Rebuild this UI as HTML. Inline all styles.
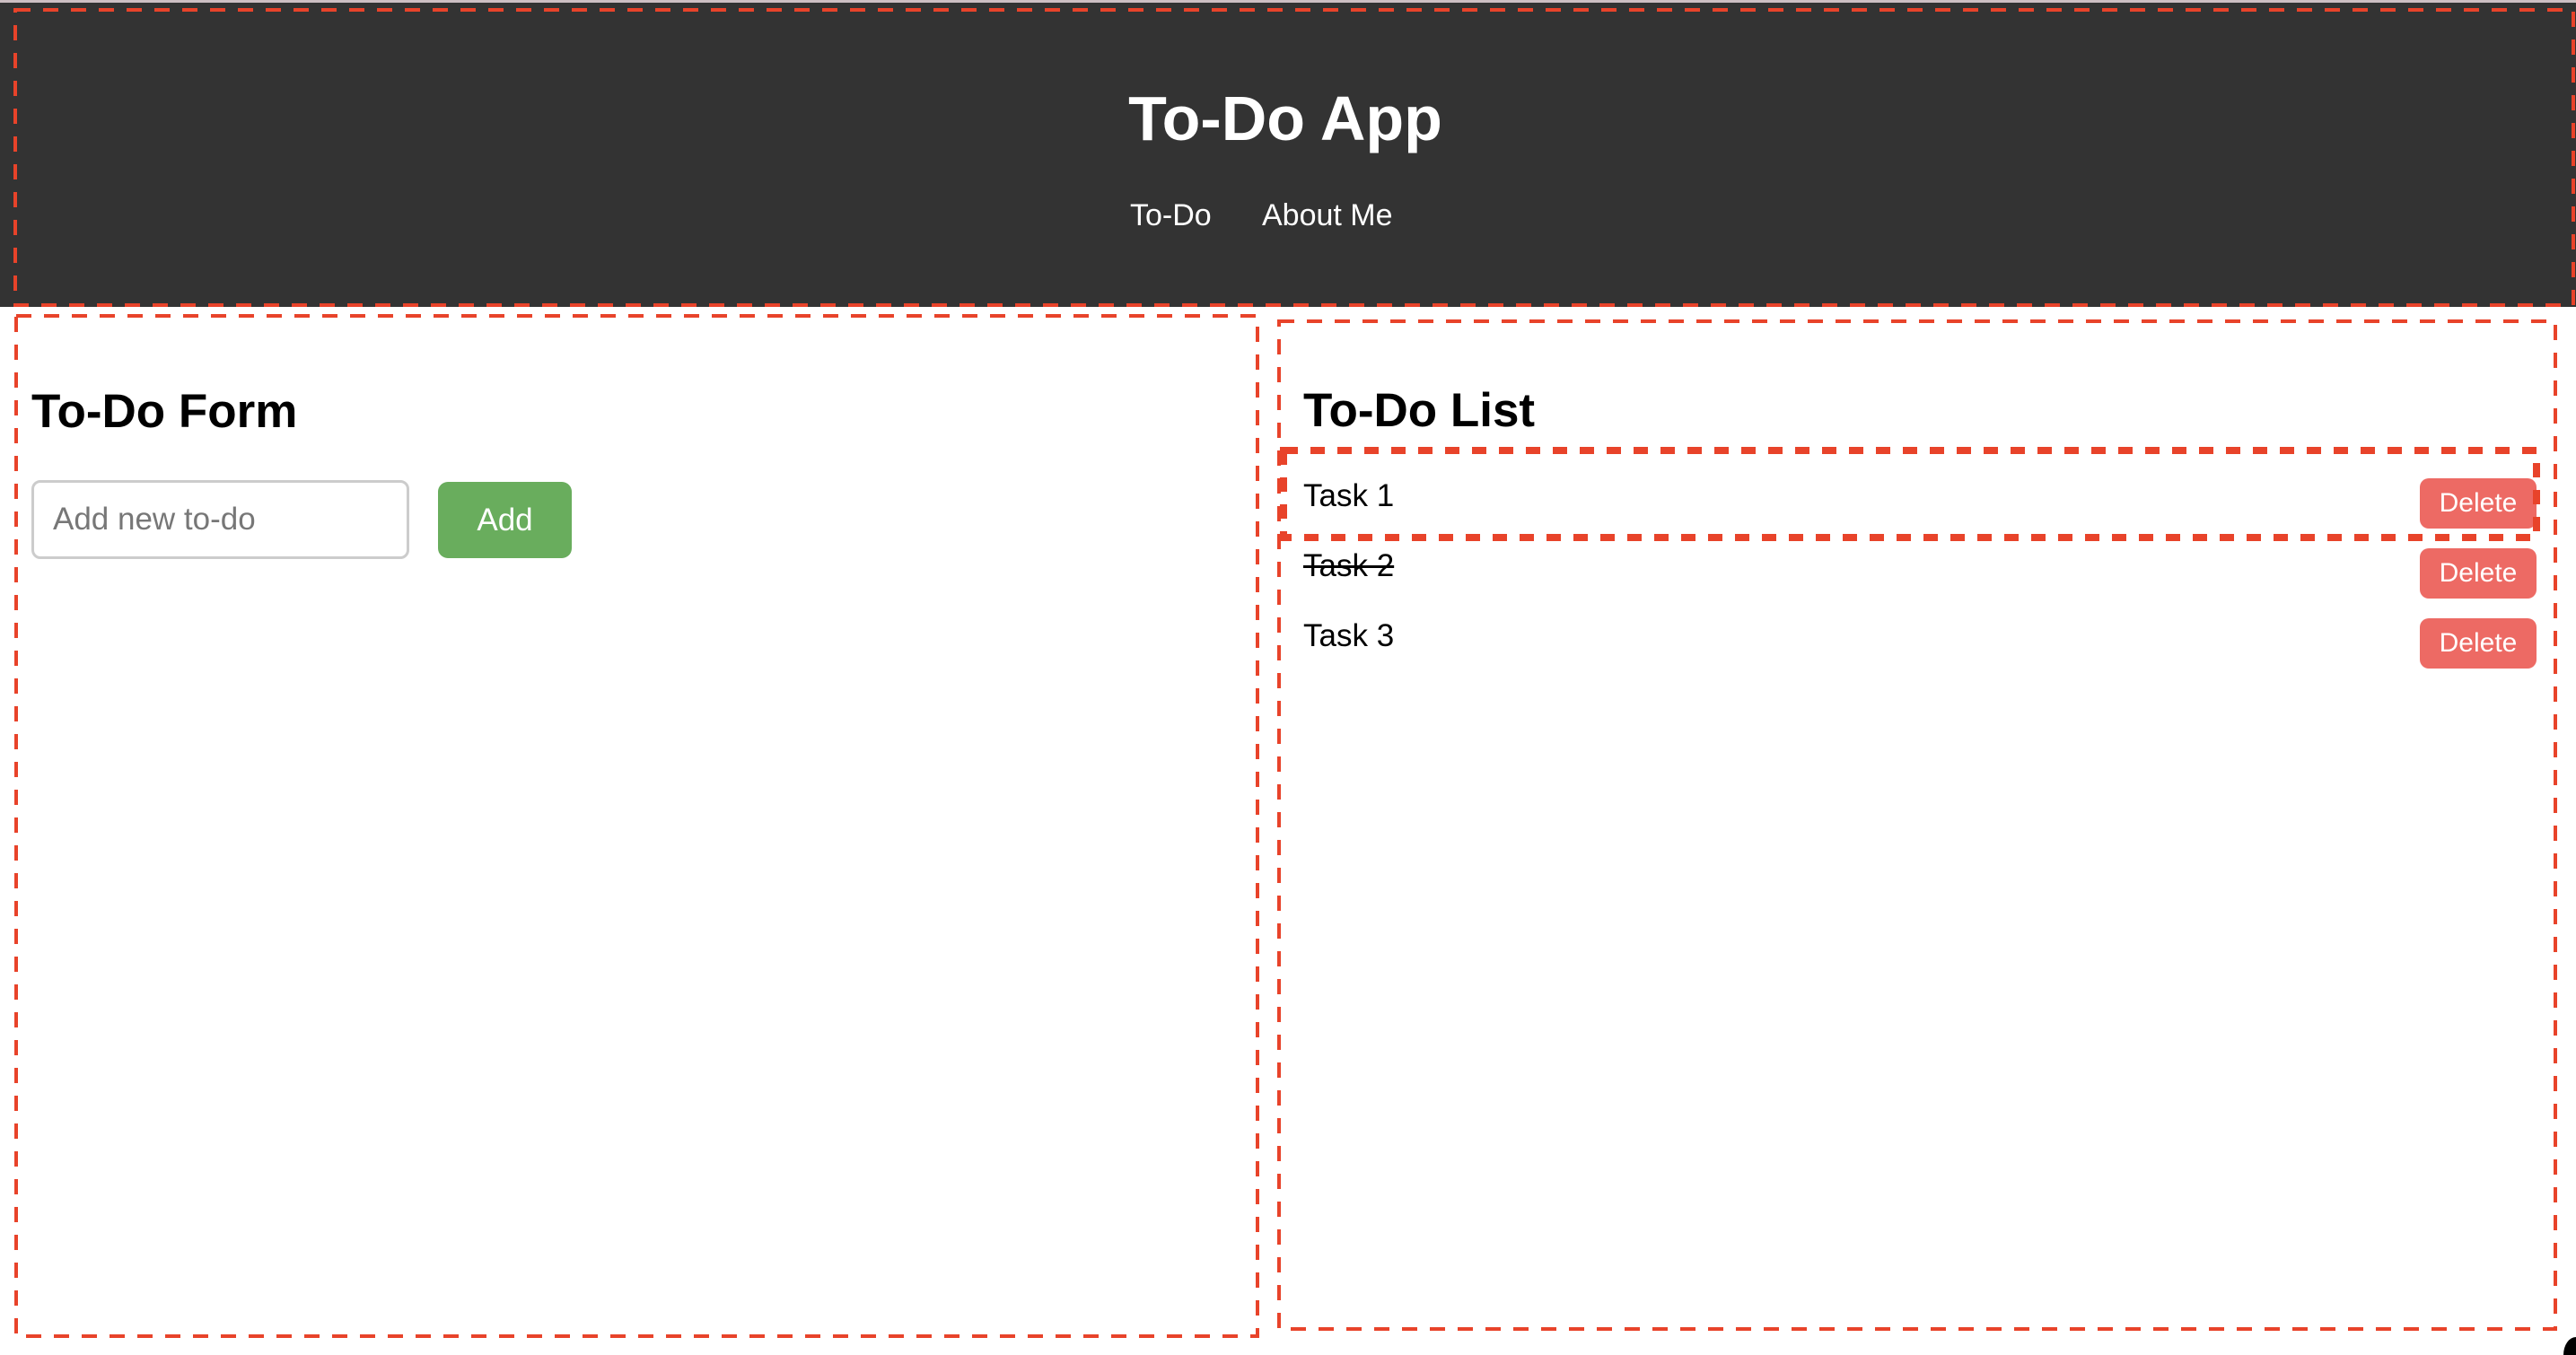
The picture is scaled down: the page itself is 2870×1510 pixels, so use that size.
<!DOCTYPE html>
<html><head><meta charset="utf-8"><style>
*{box-sizing:border-box;margin:0;padding:0}
html,body{width:2870px;height:1510px;overflow:hidden;background:#fff;font-family:"Liberation Sans",Arial,sans-serif;position:relative}
.abs{position:absolute}
.hdr{left:0;top:0;width:2870px;height:342px;background:#333;border-top:3px solid #cdbfc3}
.title{left:0;width:2870px;top:92px;text-align:center;color:#fff;font-weight:bold;font-size:70px;line-height:80px;padding-right:6px}
.nav{top:218px;color:#fff;font-size:34px;line-height:44px}
h2{position:absolute;font-size:53px;font-weight:bold;color:#000;line-height:64px}
.inp{left:35px;top:535px;width:421px;height:88px;border:3px solid #ccc;border-radius:10px;color:#777;font-size:35px;line-height:82px;padding-left:21px}
.add{left:488px;top:537px;width:149px;height:85px;background:#69ad5d;border-radius:11px;color:#fff;font-size:35px;line-height:85px;text-align:center}
.task{left:1452px;font-size:35px;color:#000;line-height:40px}
.del{left:2696px;width:130px;height:56px;background:#ed6a64;border-radius:10px;color:#fff;font-size:30px;line-height:56px;text-align:center}
svg{position:absolute;left:0;top:0}
</style></head><body>
<div class="abs hdr"></div>
<div class="abs title">To-Do App</div>
<div class="abs nav" style="left:1259px">To-Do</div>
<div class="abs nav" style="left:1406px">About Me</div>

<h2 style="left:35px;top:427px">To-Do Form</h2>
<div class="abs inp">Add new to-do</div>
<div class="abs add">Add</div>

<h2 style="left:1452px;top:426px">To-Do List</h2>
<div class="abs task" style="top:533px">Task 1</div>
<div class="abs task" style="top:611px;text-decoration:line-through">Task 2</div>
<div class="abs task" style="top:689px">Task 3</div>
<div class="abs del" style="top:533px">Delete</div>
<div class="abs del" style="top:611px">Delete</div>
<div class="abs del" style="top:689px">Delete</div>
<svg width="2870" height="1510" fill="none" stroke="#e8432a">
<g stroke-width="4" stroke-dasharray="17 14">
<rect x="17" y="11" width="2850" height="329"/>
<rect x="18" y="352" width="1383" height="1137"/>
<rect x="1425" y="358" width="1422" height="1123"/>
</g>
<rect x="1430" y="502" width="1396" height="97" stroke-width="8" stroke-dasharray="16 14"/>
</svg>
<div class="abs" style="right:0;bottom:0;width:14px;height:20px;background:#000;border-top-left-radius:14px 20px"></div>
</body></html>
